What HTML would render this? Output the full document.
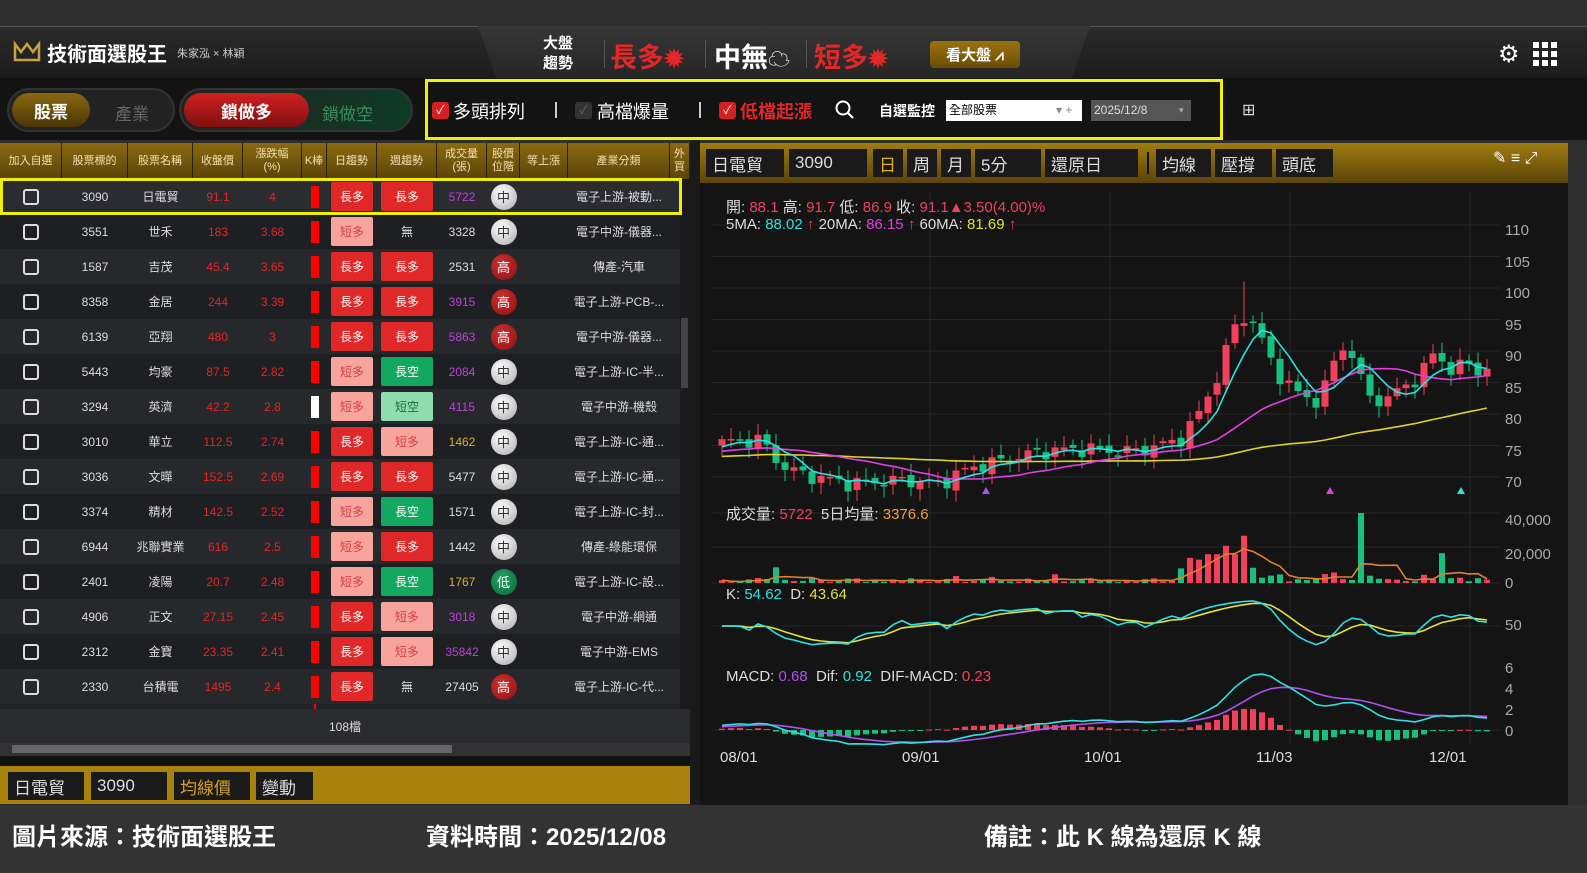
<!DOCTYPE html>
<html><head><meta charset="utf-8">
<style>
*{margin:0;padding:0;box-sizing:border-box}
body{width:1587px;height:873px;background:#2e2e2e;font-family:"Liberation Sans","Noto Sans CJK TC",sans-serif;color:#ddd;position:relative;overflow:hidden}
.a{position:absolute}
.hdr{left:0;top:26px;width:1587px;height:52px;background:linear-gradient(#2a2a2a,#1c1c1c);border-top:1px solid #555}
.tb{left:0;top:78px;width:1587px;height:62px;background:#131313}
.th{left:0;top:143px;width:690px;height:36px;background:linear-gradient(#8a6a10,#5a4308);display:flex}
.th div{border-right:1px solid #2a2005;color:#f0e0b0;font-size:11px;display:flex;align-items:center;justify-content:center;text-align:center;line-height:13px}
.row{left:0;width:680px;height:35px;display:flex;align-items:center;font-size:12px}
.row>div{display:flex;align-items:center;justify-content:center;height:35px;flex:none}
.cb{width:16px;height:16px;border:2px solid #ddd;border-radius:3px}
.r{color:#e02828}.p{color:#c040e0}.y{color:#e0b020}
.b1{width:42px;height:29px;background:#e02828;color:#fff;display:flex;align-items:center;justify-content:center;border-radius:2px}
.b2{width:52px;height:29px;background:#e02828;color:#fff;display:flex;align-items:center;justify-content:center;border-radius:2px}
.ld{background:#f6a49c;color:#d84040}.gs{background:#12a860}.lg{background:#90dcae;color:#1a7040}.nb{background:none;color:#ddd}
.c{width:26px;height:26px;border-radius:50%;background:radial-gradient(circle at 40% 35%,#fff,#aaa);color:#333;display:flex;align-items:center;justify-content:center;font-size:13px}
.c.h{background:radial-gradient(circle at 40% 35%,#d03030,#8a1010);color:#fff}
.c.l{background:radial-gradient(circle at 40% 35%,#20a060,#0a6a3a);color:#fff}
.kb{width:8px;height:22px;background:#f00;position:relative}
.gbtn{background:#1a1a1a;color:#ddd;font-size:17px;display:flex;align-items:center;padding-left:6px;height:28px}
</style></head><body>
<div class="a hdr"></div>
<div class="a" style="left:478px;top:26px;width:612px;height:52px;background:linear-gradient(#363636,#262626);clip-path:polygon(0 0,100% 0,97% 100%,3% 100%)"></div>
<svg class="a" style="left:13px;top:40px" width="28" height="22" viewBox="0 0 28 22"><path d="M2 4 L8 12 L14 4 L20 12 L26 4 L26 20 L2 20 Z" fill="none" stroke="#c8a040" stroke-width="2.5"/></svg>
<div class="a" style="left:47px;top:38px;font-size:20px;font-weight:bold;color:#fff">技術面選股王</div>
<div class="a" style="left:177px;top:45px;font-size:11px;color:#ccc">朱家泓 × 林穎</div>
<div class="a" style="left:543px;top:34px;font-size:15px;font-weight:bold;color:#fff;line-height:20px">大盤<br>趨勢</div>
<div class="a" style="left:604px;top:40px;width:1px;height:28px;background:#555"></div>
<div class="a" style="left:610px;top:36px;font-size:27px;font-weight:bold;color:#e02828">長多<span style="font-size:24px">✹</span></div>
<div class="a" style="left:705px;top:40px;width:1px;height:28px;background:#555"></div>
<div class="a" style="left:714px;top:36px;font-size:27px;font-weight:bold;color:#fff">中無<span style="font-size:22px">☁</span></div>
<div class="a" style="left:806px;top:40px;width:1px;height:28px;background:#555"></div>
<div class="a" style="left:814px;top:36px;font-size:27px;font-weight:bold;color:#e02828">短多<span style="font-size:24px">✹</span></div>
<div class="a" style="left:930px;top:41px;width:90px;height:27px;background:linear-gradient(#9a7210,#6a4e08);border-radius:4px;color:#fff;font-size:15px;font-weight:bold;display:flex;align-items:center;justify-content:center">看大盤 ⩘</div>
<div class="a" style="left:1498px;top:40px;font-size:24px;color:#fff">⚙</div>
<svg class="a" style="left:1533px;top:42px" width="24" height="24"><g fill="#fff"><rect x="0" y="0" width="6" height="6"/><rect x="9" y="0" width="6" height="6"/><rect x="18" y="0" width="6" height="6"/><rect x="0" y="9" width="6" height="6"/><rect x="9" y="9" width="6" height="6"/><rect x="18" y="9" width="6" height="6"/><rect x="0" y="18" width="6" height="6"/><rect x="9" y="18" width="6" height="6"/><rect x="18" y="18" width="6" height="6"/></g></svg>
<div class="a tb"></div>
<div class="a" style="left:7px;top:88px;width:168px;height:44px;border-radius:22px;background:#222;border:2px solid #333"></div>
<div class="a" style="left:12px;top:93px;width:78px;height:34px;border-radius:17px;background:linear-gradient(#8a6810,#4a3606);color:#fff;font-size:17px;font-weight:bold;display:flex;align-items:center;justify-content:center">股票</div>
<div class="a" style="left:115px;top:100px;font-size:17px;color:#666">產業</div>
<div class="a" style="left:179px;top:88px;width:234px;height:44px;border-radius:22px;background:linear-gradient(90deg,#222,#0f3a26);border:2px solid #333"></div>
<div class="a" style="left:184px;top:93px;width:125px;height:34px;border-radius:17px;background:linear-gradient(#d02020,#801010);color:#fff;font-size:17px;font-weight:bold;display:flex;align-items:center;justify-content:center">鎖做多</div>
<div class="a" style="left:322px;top:100px;font-size:17px;color:#3a8a5a">鎖做空</div>
<div class="a" style="left:425px;top:79px;width:798px;height:61px;border:3px solid #f0f000"></div>
<div class="a" style="left:432px;top:102px;width:17px;height:17px;background:#d82020;border-radius:3px;color:#fff;font-size:12px;text-align:center;line-height:17px">✓</div>
<div class="a" style="left:453px;top:98px;font-size:18px;color:#fff">多頭排列</div>
<div class="a" style="left:555px;top:102px;width:2px;height:16px;background:#ccc"></div>
<div class="a" style="left:575px;top:102px;width:17px;height:17px;background:#333;border-radius:3px;color:#666;font-size:12px;text-align:center;line-height:17px">✓</div>
<div class="a" style="left:597px;top:98px;font-size:18px;color:#fff">高檔爆量</div>
<div class="a" style="left:699px;top:102px;width:2px;height:16px;background:#ccc"></div>
<div class="a" style="left:719px;top:102px;width:17px;height:17px;background:#d82020;border-radius:3px;color:#fff;font-size:12px;text-align:center;line-height:17px">✓</div>
<div class="a" style="left:740px;top:98px;font-size:18px;color:#e02828;font-weight:bold">低檔起漲</div>
<svg class="a" style="left:835px;top:100px" width="20" height="20"><circle cx="8" cy="8" r="6.5" stroke="#fff" stroke-width="2" fill="none"/><path d="M13 13 L18 18" stroke="#fff" stroke-width="2.2"/></svg>
<div class="a" style="left:879px;top:101px;font-size:14px;color:#fff;font-weight:bold">自選監控</div>
<div class="a" style="left:946px;top:100px;width:136px;height:21px;background:#fff;color:#000;font-size:12px;padding-left:3px;line-height:21px">全部股票<span style="position:absolute;left:110px;color:#888">▾ +</span></div>
<div class="a" style="left:1091px;top:100px;width:100px;height:21px;background:#555;color:#ddd;font-size:12px;padding-left:3px;line-height:21px">2025/12/8<span style="position:absolute;left:88px;color:#aaa;font-size:9px">▾</span></div>
<div class="a" style="left:1242px;top:100px;font-size:16px;color:#ddd">⊞</div>
<div class="a th">
<div style="width:62px">加入自選</div><div style="width:66px">股票標的</div><div style="width:65px">股票名稱</div><div style="width:50px">收盤價</div><div style="width:59px">漲跌幅<br>(%)</div><div style="width:25px">K棒</div><div style="width:50px">日趨勢</div><div style="width:60px">週趨勢</div><div style="width:50px">成交量<br>(張)</div><div style="width:33px">股價<br>位階</div><div style="width:48px">等上漲</div><div style="width:102px">產業分類</div><div style="width:20px">外<br>買</div>
</div>
<div class="a" style="left:0;top:179px;width:690px;height:530px;background:#222326"></div>
<div class="a" style="left:680px;top:179px;width:10px;height:530px;background:#1a1a1a"></div>
<div class="a" style="left:681px;top:318px;width:7px;height:70px;background:#444"></div>
<div class="a" style="left:314px;top:179px;width:2px;height:530px;background:#f00"></div>

<div id="rows">
<div class="a row" style="top:179px;background:#2a2c30"><div style="width:62px"><div class="cb"></div></div><div style="width:66px">3090</div><div style="width:65px">日電貿</div><div style="width:50px" class="r">91.1</div><div style="width:59px" class="r">4</div><div style="width:25px"><div class="kb"></div></div><div style="width:50px"><div class="b1">長多</div></div><div style="width:60px"><div class="b2">長多</div></div><div style="width:50px" class="p">5722</div><div style="width:33px"><div class="c">中</div></div><div style="width:48px"></div><div style="width:102px">電子上游-被動...</div></div>
<div class="a row" style="top:214px;background:#1e1f22"><div style="width:62px"><div class="cb"></div></div><div style="width:66px">3551</div><div style="width:65px">世禾</div><div style="width:50px" class="r">183</div><div style="width:59px" class="r">3.68</div><div style="width:25px"><div class="kb"></div></div><div style="width:50px"><div class="b1 ld">短多</div></div><div style="width:60px"><div class="b2 nb">無</div></div><div style="width:50px">3328</div><div style="width:33px"><div class="c">中</div></div><div style="width:48px"></div><div style="width:102px">電子中游-儀器...</div></div>
<div class="a row" style="top:249px;background:#26282b"><div style="width:62px"><div class="cb"></div></div><div style="width:66px">1587</div><div style="width:65px">吉茂</div><div style="width:50px" class="r">45.4</div><div style="width:59px" class="r">3.65</div><div style="width:25px"><div class="kb"></div></div><div style="width:50px"><div class="b1">長多</div></div><div style="width:60px"><div class="b2">長多</div></div><div style="width:50px">2531</div><div style="width:33px"><div class="c h">高</div></div><div style="width:48px"></div><div style="width:102px">傳產-汽車</div></div>
<div class="a row" style="top:284px;background:#1e1f22"><div style="width:62px"><div class="cb"></div></div><div style="width:66px">8358</div><div style="width:65px">金居</div><div style="width:50px" class="r">244</div><div style="width:59px" class="r">3.39</div><div style="width:25px"><div class="kb"></div></div><div style="width:50px"><div class="b1">長多</div></div><div style="width:60px"><div class="b2">長多</div></div><div style="width:50px" class="p">3915</div><div style="width:33px"><div class="c h">高</div></div><div style="width:48px"></div><div style="width:102px">電子上游-PCB-...</div></div>
<div class="a row" style="top:319px;background:#26282b"><div style="width:62px"><div class="cb"></div></div><div style="width:66px">6139</div><div style="width:65px">亞翔</div><div style="width:50px" class="r">480</div><div style="width:59px" class="r">3</div><div style="width:25px"><div class="kb"></div></div><div style="width:50px"><div class="b1">長多</div></div><div style="width:60px"><div class="b2">長多</div></div><div style="width:50px" class="p">5863</div><div style="width:33px"><div class="c h">高</div></div><div style="width:48px"></div><div style="width:102px">電子中游-儀器...</div></div>
<div class="a row" style="top:354px;background:#1e1f22"><div style="width:62px"><div class="cb"></div></div><div style="width:66px">5443</div><div style="width:65px">均豪</div><div style="width:50px" class="r">87.5</div><div style="width:59px" class="r">2.82</div><div style="width:25px"><div class="kb"></div></div><div style="width:50px"><div class="b1 ld">短多</div></div><div style="width:60px"><div class="b2 gs">長空</div></div><div style="width:50px" class="p">2084</div><div style="width:33px"><div class="c">中</div></div><div style="width:48px"></div><div style="width:102px">電子上游-IC-半...</div></div>
<div class="a row" style="top:389px;background:#26282b"><div style="width:62px"><div class="cb"></div></div><div style="width:66px">3294</div><div style="width:65px">英濟</div><div style="width:50px" class="r">42.2</div><div style="width:59px" class="r">2.8</div><div style="width:25px"><div class="kb" style="background:#fff"></div></div><div style="width:50px"><div class="b1 ld">短多</div></div><div style="width:60px"><div class="b2 lg">短空</div></div><div style="width:50px" class="p">4115</div><div style="width:33px"><div class="c">中</div></div><div style="width:48px"></div><div style="width:102px">電子中游-機殼</div></div>
<div class="a row" style="top:424px;background:#1e1f22"><div style="width:62px"><div class="cb"></div></div><div style="width:66px">3010</div><div style="width:65px">華立</div><div style="width:50px" class="r">112.5</div><div style="width:59px" class="r">2.74</div><div style="width:25px"><div class="kb"></div></div><div style="width:50px"><div class="b1">長多</div></div><div style="width:60px"><div class="b2 ld">短多</div></div><div style="width:50px" class="y">1462</div><div style="width:33px"><div class="c">中</div></div><div style="width:48px"></div><div style="width:102px">電子上游-IC-通...</div></div>
<div class="a row" style="top:459px;background:#26282b"><div style="width:62px"><div class="cb"></div></div><div style="width:66px">3036</div><div style="width:65px">文曄</div><div style="width:50px" class="r">152.5</div><div style="width:59px" class="r">2.69</div><div style="width:25px"><div class="kb"></div></div><div style="width:50px"><div class="b1">長多</div></div><div style="width:60px"><div class="b2">長多</div></div><div style="width:50px">5477</div><div style="width:33px"><div class="c">中</div></div><div style="width:48px"></div><div style="width:102px">電子上游-IC-通...</div></div>
<div class="a row" style="top:494px;background:#1e1f22"><div style="width:62px"><div class="cb"></div></div><div style="width:66px">3374</div><div style="width:65px">精材</div><div style="width:50px" class="r">142.5</div><div style="width:59px" class="r">2.52</div><div style="width:25px"><div class="kb"></div></div><div style="width:50px"><div class="b1 ld">短多</div></div><div style="width:60px"><div class="b2 gs">長空</div></div><div style="width:50px">1571</div><div style="width:33px"><div class="c">中</div></div><div style="width:48px"></div><div style="width:102px">電子上游-IC-封...</div></div>
<div class="a row" style="top:529px;background:#26282b"><div style="width:62px"><div class="cb"></div></div><div style="width:66px">6944</div><div style="width:65px">兆聯實業</div><div style="width:50px" class="r">616</div><div style="width:59px" class="r">2.5</div><div style="width:25px"><div class="kb"></div></div><div style="width:50px"><div class="b1 ld">短多</div></div><div style="width:60px"><div class="b2">長多</div></div><div style="width:50px">1442</div><div style="width:33px"><div class="c">中</div></div><div style="width:48px"></div><div style="width:102px">傳產-綠能環保</div></div>
<div class="a row" style="top:564px;background:#1e1f22"><div style="width:62px"><div class="cb"></div></div><div style="width:66px">2401</div><div style="width:65px">凌陽</div><div style="width:50px" class="r">20.7</div><div style="width:59px" class="r">2.48</div><div style="width:25px"><div class="kb"></div></div><div style="width:50px"><div class="b1 ld">短多</div></div><div style="width:60px"><div class="b2 gs">長空</div></div><div style="width:50px" class="y">1767</div><div style="width:33px"><div class="c l">低</div></div><div style="width:48px"></div><div style="width:102px">電子上游-IC-設...</div></div>
<div class="a row" style="top:599px;background:#26282b"><div style="width:62px"><div class="cb"></div></div><div style="width:66px">4906</div><div style="width:65px">正文</div><div style="width:50px" class="r">27.15</div><div style="width:59px" class="r">2.45</div><div style="width:25px"><div class="kb"></div></div><div style="width:50px"><div class="b1">長多</div></div><div style="width:60px"><div class="b2 ld">短多</div></div><div style="width:50px" class="p">3018</div><div style="width:33px"><div class="c">中</div></div><div style="width:48px"></div><div style="width:102px">電子中游-網通</div></div>
<div class="a row" style="top:634px;background:#1e1f22"><div style="width:62px"><div class="cb"></div></div><div style="width:66px">2312</div><div style="width:65px">金寶</div><div style="width:50px" class="r">23.35</div><div style="width:59px" class="r">2.41</div><div style="width:25px"><div class="kb"></div></div><div style="width:50px"><div class="b1">長多</div></div><div style="width:60px"><div class="b2 ld">短多</div></div><div style="width:50px" class="p">35842</div><div style="width:33px"><div class="c">中</div></div><div style="width:48px"></div><div style="width:102px">電子中游-EMS</div></div>
<div class="a row" style="top:669px;background:#26282b"><div style="width:62px"><div class="cb"></div></div><div style="width:66px">2330</div><div style="width:65px">台積電</div><div style="width:50px" class="r">1495</div><div style="width:59px" class="r">2.4</div><div style="width:25px"><div class="kb"></div></div><div style="width:50px"><div class="b1">長多</div></div><div style="width:60px"><div class="b2 nb">無</div></div><div style="width:50px">27405</div><div style="width:33px"><div class="c h">高</div></div><div style="width:48px"></div><div style="width:102px">電子上游-IC-代...</div></div>
</div>
<div class="a" style="left:0;top:178px;width:682px;height:37px;border:3px solid #f0f000"></div>
<div class="a" style="left:0;top:709px;width:690px;height:34px;background:#2a2b2e;font-size:12px;text-align:center;line-height:36px;color:#ddd">108檔</div>
<div class="a" style="left:0;top:743px;width:690px;height:13px;background:#333"></div>
<div class="a" style="left:12px;top:745px;width:440px;height:8px;background:#666"></div>
<div class="a" style="left:0;top:756px;width:690px;height:10px;background:#111"></div>
<div class="a" style="left:0;top:766px;width:690px;height:38px;background:#a8820c"></div>
<div class="a gbtn" style="left:8px;top:772px;width:76px">日電貿</div>
<div class="a gbtn" style="left:91px;top:772px;width:76px">3090</div>
<div class="a gbtn" style="left:174px;top:772px;width:76px;color:#d4a020">均線價</div>
<div class="a gbtn" style="left:256px;top:772px;width:57px">變動</div>
<div class="a" style="left:690px;top:140px;width:10px;height:665px;background:#1a1a1a"></div>
<div class="a" style="left:700px;top:143px;width:868px;height:40px;background:linear-gradient(#a07c10,#5a4408)"></div>
<div class="a gbtn" style="left:706px;top:149px;width:78px">日電貿</div>
<div class="a gbtn" style="left:789px;top:149px;width:78px">3090</div>
<div class="a gbtn" style="left:873px;top:149px;width:30px;color:#e0b020">日</div>
<div class="a gbtn" style="left:907px;top:149px;width:30px">周</div>
<div class="a gbtn" style="left:941px;top:149px;width:30px">月</div>
<div class="a gbtn" style="left:975px;top:149px;width:66px">5分</div>
<div class="a gbtn" style="left:1045px;top:149px;width:93px">還原日</div>
<div class="a" style="left:1147px;top:152px;width:2px;height:22px;background:#111"></div>
<div class="a gbtn" style="left:1156px;top:149px;width:55px">均線</div>
<div class="a gbtn" style="left:1215px;top:149px;width:57px">壓撐</div>
<div class="a gbtn" style="left:1276px;top:149px;width:57px">頭底</div>
<div class="a" style="left:1493px;top:148px;font-size:16px;color:#fff">✎ ≡ ⤢</div>
<div class="a" style="left:700px;top:183px;width:868px;height:622px;background:#141414"></div>
<svg class="a" id="ch" style="left:0;top:0" width="1587" height="873"></svg>
<div class="a" style="left:726px;top:199px;font-size:15px;line-height:17px;color:#ddd">開: <span style="color:#f04060">88.1</span> 高: <span style="color:#f04060">91.7</span> 低: <span style="color:#f04060">86.9</span> 收: <span style="color:#f04060">91.1▲3.50(4.00)%</span><br>5MA: <span style="color:#30e0e0">88.02</span> <span style="color:#f04060">↑</span> 20MA: <span style="color:#e040e0">86.15</span> <span style="color:#f04060">↑</span> 60MA: <span style="color:#e0e040">81.69</span> <span style="color:#f04060">↑</span></div>
<div class="a" style="left:726px;top:503px;font-size:15px">成交量: <span style="color:#f04060">5722</span> &nbsp;5日均量: <span style="color:#f0a040">3376.6</span></div>
<div class="a" style="left:726px;top:586px;font-size:15px">K: <span style="color:#30e0e0">54.62</span> &nbsp;D: <span style="color:#e0e040">43.64</span></div>
<div class="a" style="left:726px;top:668px;font-size:15px">MACD: <span style="color:#b050f0">0.68</span> &nbsp;Dif: <span style="color:#30e0e0">0.92</span> &nbsp;DIF-MACD: <span style="color:#f04060">0.23</span></div>
<div class="a" style="left:1505px;top:215px;font-size:15px;color:#aaa;line-height:31.5px">110<br>105<br>100<br>95<br>90<br>85<br>80<br>75<br>70</div>
<div class="a" style="left:1505px;top:504px;font-size:15px;color:#aaa;line-height:34px">40,000<br>20,000</div>
<div class="a" style="left:1505px;top:575px;font-size:15px;color:#aaa">0</div>
<div class="a" style="left:1505px;top:617px;font-size:15px;color:#aaa">50</div>
<div class="a" style="left:1505px;top:658px;font-size:15px;color:#aaa;line-height:21px">6<br>4<br>2<br>0</div>
<div class="a" style="left:720px;top:749px;font-size:15px;color:#ddd">08/01</div>
<div class="a" style="left:902px;top:749px;font-size:15px;color:#ddd">09/01</div>
<div class="a" style="left:1084px;top:749px;font-size:15px;color:#ddd">10/01</div>
<div class="a" style="left:1256px;top:749px;font-size:15px;color:#ddd">11/03</div>
<div class="a" style="left:1429px;top:749px;font-size:15px;color:#ddd">12/01</div>
<div class="a" style="left:0;top:805px;width:1587px;height:68px;background:#333"></div>
<div class="a" style="left:12px;top:817px;font-size:24px;font-weight:bold;color:#fff">圖片來源：技術面選股王</div>
<div class="a" style="left:426px;top:817px;font-size:24px;font-weight:bold;color:#fff">資料時間：2025/12/08</div>
<div class="a" style="left:984px;top:817px;font-size:24px;font-weight:bold;color:#fff">備註：此 K 線為還原 K 線</div>
<script>
(function(){
var s=document.getElementById('ch'),h='';
function py(p){return 225+(110-p)*6.3}
[225,256.5,288,319.5,351,382.5,414,445.5,477,513,547,583,626,730].forEach(function(y){h+='<line x1="712" x2="1500" y1="'+y+'" y2="'+y+'" stroke="#262626"/>'});
[930,1110,1290,1470].forEach(function(x){h+='<line x1="'+x+'" x2="'+x+'" y1="190" y2="745" stroke="#222"/>'});
var A=[[722,75.5],[760,76],[780,72],[800,70.5],[850,69],[900,69.5],[940,69],[970,71.5],[1000,72.5],[1040,74],[1080,74.5],[1130,74],[1160,75],[1180,76],[1195,79],[1215,85],[1235,94],[1250,96],[1260,92],[1280,86],[1300,83],[1320,82],[1340,91],[1355,89],[1365,83],[1385,82],[1400,84],[1420,86],[1435,90],[1450,87],[1470,88],[1485,86],[1492,90]];
function interp(x){for(var i=0;i<A.length-1;i++){if(x<=A[i+1][0]){var t=(x-A[i][0])/(A[i+1][0]-A[i][0]);return A[i][1]+t*(A[i+1][1]-A[i][1])}}return A[A.length-1][1]}
var N=86,X=[],C=[],O=[];
var prev=75;
for(var i=0;i<N;i++){var x=722+i*9;X.push(x);var c=interp(x)+0.9*Math.sin(i*1.7)+0.5*Math.cos(i*2.9);O.push(prev+0.4*Math.sin(i*3.1));C.push(c);prev=c}
var all=[];for(var i=0;i<60;i++)all.push(72+0.04*i+Math.sin(i)*0.5);var off=60;all=all.concat(C);
function ma(n,i){var t=0;for(var k=0;k<n;k++)t+=all[i+off-k];return t/n}
function line(arr,col){return '<polyline fill="none" stroke="'+col+'" stroke-width="1.6" points="'+arr.map(function(v,i){return X[i]+','+v.toFixed(1)}).join(' ')+'"/>'}
var V=[];
for(var i=0;i<N;i++){var o=O[i],c=C[i],up=c>=o,col=up?'#f0405a':'#18c080';var hi=Math.max(o,c)+0.6+Math.abs(Math.sin(i*5))*1.2,lo=Math.min(o,c)-0.6-Math.abs(Math.cos(i*4))*1.2;
if(X[i]>1240&&X[i]<1252)hi+=5;
h+='<line x1="'+X[i]+'" x2="'+X[i]+'" y1="'+py(hi)+'" y2="'+py(lo)+'" stroke="'+col+'"/>';
var t=py(Math.max(o,c)),b=py(Math.min(o,c));if(b-t<1.5)b=t+1.5;h+='<rect x="'+(X[i]-3.5)+'" y="'+t+'" width="7" height="'+(b-t)+'" fill="'+col+'"/>';
var v=500+1100*Math.abs(c-o);if(X[i]>1180&&X[i]<1260)v+=6000+8000*Math.sin((X[i]-1180)/80*Math.PI);if(Math.abs(X[i]-1245)<5)v=27000;if(Math.abs(X[i]-1357)<5)v=40000;if(Math.abs(X[i]-1330)<5)v=6000;if(Math.abs(X[i]-1441)<5)v=17000;if(Math.abs(X[i]-1056)<5)v=5000;if(Math.abs(X[i]-776)<5)v=9000;
V.push(v);var vh=v*70/40000;h+='<rect x="'+(X[i]-3)+'" y="'+(583-vh)+'" width="6" height="'+vh+'" fill="'+col+'"/>';}
h+=line(X.map(function(_,i){return py(ma(60,i))}),'#e0d030');
h+=line(X.map(function(_,i){return py(ma(20,i))}),'#e040e0');
h+=line(X.map(function(_,i){return py(ma(5,i))}),'#30e0e0');
h+=line(V.map(function(_,i){var t=0,n=0;for(var k=Math.max(0,i-4);k<=i;k++){t+=V[k];n++}return 583-t/n*70/40000}),'#e08030');
var K=50,D=50,KA=[],DA=[];for(var i=0;i<N;i++){var hh=-1e9,ll=1e9;for(var k=Math.max(0,i-8);k<=i;k++){hh=Math.max(hh,C[k]+1);ll=Math.min(ll,C[k]-1)}var r=(C[i]-ll)/(hh-ll)*100;K=K*2/3+r/3;D=D*2/3+K/3;KA.push(655-K*0.58);DA.push(655-D*0.58)}
h+=line(DA,'#e0e040');h+=line(KA,'#30e0e0');
var e12=all[0],e26=all[0],sg=0,DI=[],SG=[];for(var i=0;i<all.length;i++){e12+=(all[i]-e12)*2/13;e26+=(all[i]-e26)*2/27;var d=e12-e26;sg+=(d-sg)*0.2;if(i>=off){DI.push(d);SG.push(sg)}}
for(var i=0;i<N;i++){var hv=(DI[i]-SG[i]),col=hv>=0?'#f0405a':'#18c080';var y0=730,y1=730-hv*10.5;h+='<rect x="'+(X[i]-3)+'" y="'+Math.min(y0,y1)+'" width="6" height="'+Math.max(1,Math.abs(y1-y0))+'" fill="'+col+'"/>'}
h+=line(SG.map(function(v){return 730-v*10.5}),'#b050f0');h+=line(DI.map(function(v){return 730-v*10.5}),'#30e0e0');
h+='<polygon points="982,494 986,487 990,494" fill="#b050f0"/><polygon points="1326,494 1330,487 1334,494" fill="#e040e0"/><polygon points="1457,494 1461,487 1465,494" fill="#30e0e0"/>';
s.innerHTML=h;
})();
</script>
</body></html>
